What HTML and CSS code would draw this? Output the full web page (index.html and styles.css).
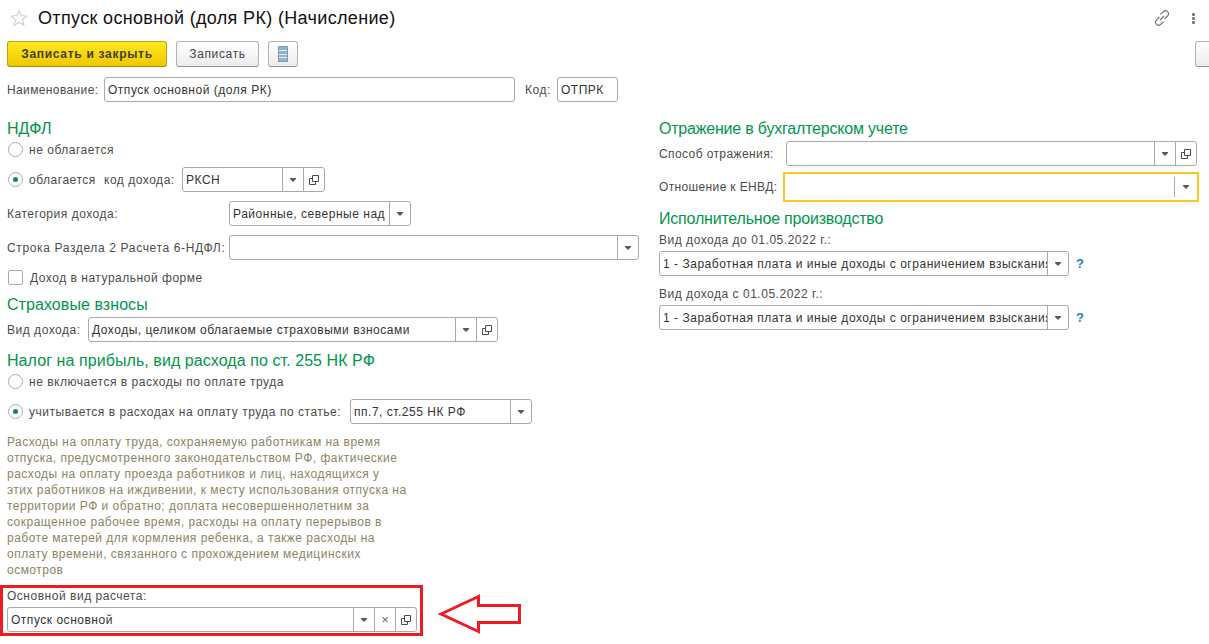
FILE: index.html
```html
<!DOCTYPE html>
<html lang="ru">
<head>
<meta charset="utf-8">
<title>Отпуск основной (доля РК) (Начисление)</title>
<link rel="stylesheet" href="styles.css">
</head>
<body>
<svg class="defs" width="0" height="0">
  <defs>
    <symbol id="open" viewBox="0 0 10 10"><path d="M3.500 .5h6v6h-6z M3.500 3.500H.5v6h6V6.500" fill="none" stroke="#4a4a4a"/></symbol>
    <symbol id="caret" viewBox="0 0 6 4"><path d="M0 0h6v1L3 4 0 1z" fill="#5a5a5a"/></symbol>
  </defs>
</svg>
<div class="page">
  <header class="title-row">
    <svg class="star" viewBox="0 0 18 18"><path d="M9 1.500l2.200 5.100 5.500.5-4.200 3.600 1.300 5.400L9 13.200l-4.800 2.900 1.300-5.400L1.300 7.100l5.500-.5z" fill="none" stroke="#cdcdcd" stroke-width="1.100"/></svg>
    <h1 class="title">Отпуск основной (доля РК) (Начисление)</h1>
    <svg class="link" viewBox="0 0 16 16"><g fill="none" stroke="#6e6e6e" stroke-width="1.100"><path d="M6.300 4.300L9.500 1.500a2.900 2.900 0 0 1 4 .2 2.900 2.900 0 0 1 .3 4L10.500 9"/><path d="M9.700 11.700L6.500 14.500a2.900 2.900 0 0 1-4-.2 2.900 2.900 0 0 1-.3-4L5.500 7"/><path d="M6 10l4-4"/></g></svg>
    <div class="kebab"><i></i><i></i><i></i></div>
  </header>

  <div class="toolbar">
    <button class="btn btn-primary">Записать и закрыть</button>
    <button class="btn btn-save">Записать</button>
    <button class="btn btn-icon"><span class="list-icon"><i></i><i></i><i></i><i></i></span></button>
    <button class="btn btn-cut"></button>
  </div>

  <div class="row name-row">
    <span class="label lbl-name">Наименование:</span>
    <div class="field w-name"><span class="value">Отпуск основной (доля РК)</span></div>
    <span class="label code-label">Код:</span>
    <div class="field w-code"><span class="value">ОТПРК</span></div>
  </div>

  <div class="columns">
    <section class="col-left">
      <h2 class="group">НДФЛ</h2>
      <label class="check-row mt3"><span class="radio"></span><span class="label">не облагается</span></label>
      <div class="row mt9">
        <span class="radio on"></span><span class="label lbl-taxed">облагается</span><span class="label code-income">код дохода:</span>
        <div class="field w-income"><span class="value">РКСН</span><span class="seg"><svg class="caret"><use href="#caret"/></svg></span><span class="seg"><svg class="open"><use href="#open"/></svg></span></div>
      </div>
      <div class="row mt9">
        <span class="label lbl-222">Категория дохода:</span>
        <div class="field w-cat"><span class="value">Районные, северные над</span><span class="seg"><svg class="caret"><use href="#caret"/></svg></span></div>
      </div>
      <div class="row mt9">
        <span class="label lbl-222 lbl-wide">Строка Раздела 2 Расчета 6-НДФЛ:</span>
        <div class="field w-line"><span class="value"></span><span class="seg"><svg class="caret"><use href="#caret"/></svg></span></div>
      </div>
      <label class="check-row mt8"><span class="checkbox"></span><span class="label">Доход в натуральной форме</span></label>
      <h2 class="group mt9">Страховые взносы</h2>
      <div class="row mt4">
        <span class="label lbl-vid">Вид дохода:</span>
        <div class="field w-line"><span class="value">Доходы, целиком облагаемые страховыми взносами</span><span class="seg"><svg class="caret"><use href="#caret"/></svg></span><span class="seg"><svg class="open"><use href="#open"/></svg></span></div>
      </div>
      <h2 class="group mt9">Налог на прибыль, вид расхода по ст. 255 НК РФ</h2>
      <label class="check-row mt3"><span class="radio"></span><span class="label">не включается в расходы по оплате труда</span></label>
      <div class="row mt9">
        <span class="radio on"></span><span class="label lbl-art">учитывается в расходах на оплату труда по статье:</span>
        <div class="field w-cat"><span class="value">пп.7, ст.255 НК РФ</span><span class="seg"><svg class="caret"><use href="#caret"/></svg></span></div>
      </div>
      <p class="note">Расходы на оплату труда, сохраняемую работникам на время<br>отпуска, предусмотренного законодательством РФ, фактические<br>расходы на оплату проезда работников и лиц, находящихся у<br>этих работников на иждивении, к месту использования отпуска на<br>территории РФ и обратно; доплата несовершеннолетним за<br>сокращенное рабочее время, расходы на оплату перерывов в<br>работе матерей для кормления ребенка, а также расходы на<br>оплату времени, связанного с прохождением медицинских<br>осмотров</p>
      <div class="highlight">
        <div class="label stack-label">Основной вид расчета:</div>
        <div class="field w-main"><span class="value">Отпуск основной</span><span class="seg"><svg class="caret"><use href="#caret"/></svg></span><span class="seg"><span class="clear">×</span></span><span class="seg"><svg class="open"><use href="#open"/></svg></span></div>
        <svg class="arrow" viewBox="0 0 90 46"><path d="M7 24L44.500 6.500v9h41v17h-41v9z" fill="#fff" stroke="#ed1c24" stroke-width="3"/></svg>
      </div>
    </section>

    <section class="col-right">
      <h2 class="group">Отражение в бухгалтерском учете</h2>
      <div class="row mt4">
        <span class="label lbl-127">Способ отражения:</span>
        <div class="field w-right"><span class="value"></span><span class="seg"><svg class="caret"><use href="#caret"/></svg></span><span class="seg"><svg class="open"><use href="#open"/></svg></span></div>
      </div>
      <div class="row focus-row">
        <span class="label lbl-124">Отношение к ЕНВД:</span>
        <div class="field-focus"><span class="value"></span><span class="seg"><svg class="caret"><use href="#caret"/></svg></span></div>
      </div>
      <h2 class="group mt7">Исполнительное производство</h2>
      <div class="label stack-label mt3">Вид дохода до 01.05.2022 г.:</div>
      <div class="row mt3">
        <div class="field w-line"><span class="value">1 - Заработная плата и иные доходы с ограничением взыскания</span><span class="seg"><svg class="caret"><use href="#caret"/></svg></span></div>
        <span class="help">?</span>
      </div>
      <div class="label stack-label mt8">Вид дохода с 01.05.2022 г.:</div>
      <div class="row mt3">
        <div class="field w-line"><span class="value">1 - Заработная плата и иные доходы с ограничением взыскания</span><span class="seg"><svg class="caret"><use href="#caret"/></svg></span></div>
        <span class="help">?</span>
      </div>
    </section>
  </div>
</div>
</body>
</html>
```

FILE: styles.css
```css
* { box-sizing: border-box; }
html, body { margin: 0; padding: 0; background: #fff; }
body { font-family: "Liberation Sans", Arial, sans-serif; font-size: 12px; color: #4b4b4b; overflow: hidden; height: 644px; }
.defs { display: block; height: 0; }
.page { width: 1209px; height: 644px; overflow: hidden; }

.title-row { display: flex; align-items: center; height: 36px; padding-left: 10px; }
.star { width: 18px; height: 18px; flex: none; }
.title { margin: 0 0 0 10px; font-size: 18px; font-weight: 400; color: #111; letter-spacing: .34px; white-space: nowrap; }
.link { width: 16px; height: 16px; margin-left: auto; flex: none; }
.kebab { display: flex; flex-direction: column; gap: 1px; margin: 0 14px 0 22px; flex: none; }
.kebab i { display: block; width: 3px; height: 3px; background: #777; border-radius: 1px; }

.toolbar { display: flex; margin-top: 5px; padding-left: 7px; height: 26px; }
.btn { flex: none; font: inherit; height: 26px; padding: 0; border: 1px solid #b3b3b3; border-bottom-color: #969696; border-radius: 3px; background: linear-gradient(#fff, #ececec); color: #444; letter-spacing: .65px; }
.btn-primary { width: 160px; background: linear-gradient(#ffe81e, #f0c800); border-color: #b8a020; border-bottom-color: #a08a18; color: #444026; font-weight: 700; letter-spacing: .7px; }
.btn-save { width: 83px; margin-left: 9px; }
.btn-icon { width: 30px; margin-left: 9px; display: flex; align-items: center; justify-content: center; }
.btn-cut { width: 30px; margin-left: 897px; }
.list-icon { display: flex; flex-direction: column; gap: 1px; width: 10px; height: 16px; padding: 0; border: 1px solid #7f9db4; background: #e4ecf2; }
.list-icon i { display: block; flex: 1; background: #93b3ca; }

.row { display: flex; align-items: center; height: 25px; }
.name-row { margin-top: 10px; padding-left: 7px; }
.label { letter-spacing: .52px; white-space: nowrap; }
.lbl-name { width: 97px; flex: none; letter-spacing: .38px; }
.code-label { margin-left: 10px; width: 32px; flex: none; }
.field { display: flex; height: 25px; border: 1px solid #a9a9a9; border-radius: 3px; background: #fff; flex: none; overflow: hidden; }
.value { flex: 1; min-width: 0; padding: 0 3px; line-height: 25px; color: #333; letter-spacing: .52px; white-space: nowrap; overflow: hidden; }
.seg { flex: none; width: 21px; border-left: 1px solid #a9a9a9; display: flex; align-items: center; justify-content: center; }
.caret { width: 6px; height: 4px; display: block; }
.open { width: 10px; height: 10px; display: block; }
.clear { color: #666; font-size: 13px; line-height: 1; }
.w-name { width: 411px; }
.w-code { width: 61px; }
.w-income { width: 143px; }
.w-cat { width: 182px; }
.w-line { width: 410px; }
.w-right { width: 411px; }

.columns { display: flex; margin-top: 17px; }
.col-left { width: 659px; flex: none; padding-left: 7px; }
.col-right { flex: 1; }
.group { margin: 0; height: 18px; font-size: 16px; font-weight: 400; line-height: 20px; letter-spacing: .07px; color: #00964b; white-space: nowrap; }
.col-right .group { letter-spacing: -.2px; }
.mt3 { margin-top: 3px; }
.mt4 { margin-top: 4px; }
.mt7 { margin-top: 7px; }
.mt8 { margin-top: 8px; }
.mt9 { margin-top: 9px; }
.check-row { display: flex; align-items: center; height: 18px; }
.check-row .label { padding-top: 1px; }
.radio { width: 15px; height: 15px; border: 1px solid #ababab; border-radius: 50%; margin: 0 6px 0 1px; flex: none; background: #fff; display: flex; align-items: center; justify-content: center; }
.radio.on::after { content: ""; width: 5px; height: 5px; border-radius: 50%; background: #17865a; }
.checkbox { width: 15px; height: 15px; border: 1px solid #ababab; border-radius: 2px; margin: 0 7px 0 1px; flex: none; }
.lbl-taxed { width: 66px; flex: none; }
.code-income { margin-left: 9px; width: 78px; flex: none; }
.lbl-222 { width: 222px; flex: none; }
.lbl-wide { letter-spacing: .64px; }
.lbl-vid { width: 81px; flex: none; }
.lbl-art { width: 321px; flex: none; }
.lbl-127 { width: 127px; flex: none; letter-spacing: .4px; }
.lbl-124 { width: 124px; flex: none; letter-spacing: .36px; }
.note { margin: 9px 0 0; padding-top: 1px; font-size: 12px; line-height: 16px; color: #8b8463; letter-spacing: .48px; white-space: nowrap; }

.highlight { position: relative; margin: 7px 0 0 -7px; width: 423px; height: 51px; border: 3px solid #ed1c24; padding: 0 0 0 4px; }
.stack-label { height: 18px; line-height: 20px; }
.highlight .stack-label { line-height: 16px; }
.highlight .field { width: 410px; margin-top: 1px; }
.arrow { position: absolute; left: 431px; top: 2px; width: 90px; height: 46px; }

.focus-row { height: 30px; margin-top: 6px; }
.field-focus { display: flex; width: 416px; height: 30px; border: 2px solid #fbc81f; background: #fff; padding: 3px 0; flex: none; }
.field-focus .seg { width: 23px; }
.help { margin-left: 7px; color: #1a80c4; font-size: 13px; font-weight: 700; }
```
